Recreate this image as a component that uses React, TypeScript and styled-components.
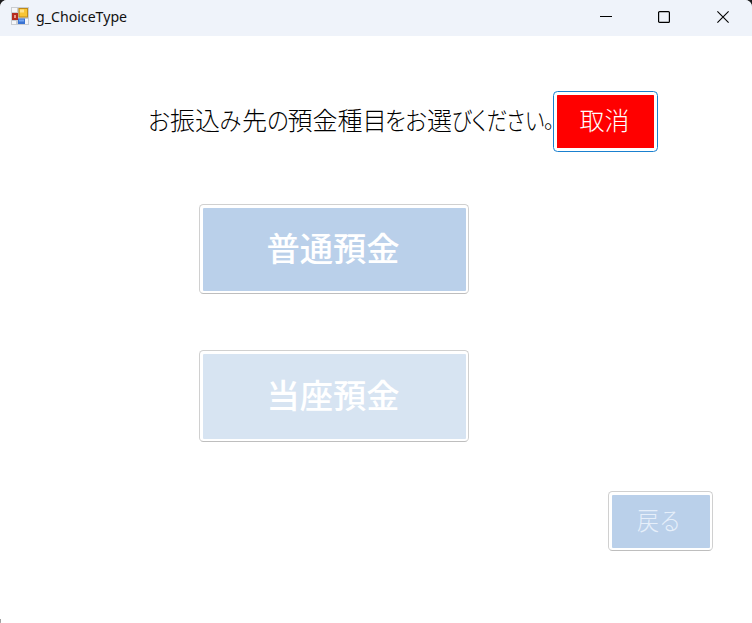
import React from "react";
import styled, { createGlobalStyle } from "styled-components";

const GlobalStyle = createGlobalStyle`
  * { box-sizing: border-box; }
  body { margin: 0; background: #1d1d1f; overflow: hidden; }
`;

const Window = styled.div`
  width: 752px;
  height: 623px;
  display: flex;
  flex-direction: column;
  overflow: hidden;
  border-radius: 7px 7px 0 1px;
  background: #fff;
  font-family: "Noto Sans CJK JP", sans-serif;
`;

const TitleBar = styled.header`
  flex: 0 0 36px;
  display: flex;
  align-items: flex-start;
  background: #eff3fa;
`;

const AppIcon = styled.svg`
  width: 18px;
  height: 18px;
  margin: 7px 0 0 11px;
`;

const Title = styled.span`
  flex: 1;
  margin: 7px 0 0 7px;
  font: 14px/20px "Noto Sans", sans-serif;
  color: #111;
`;

const TitleText = styled.span`
  display: inline-block;
  transform: scaleX(1.01);
  transform-origin: left;
`;

const WindowButton = styled.button`
  width: 58.5px;
  height: 34px;
  padding: 0;
  border: 0;
  background: none;
  display: grid;
  place-items: center;
`;

const Body = styled.main`
  flex: 1;
  display: flex;
  flex-direction: column;
`;

const PromptRow = styled.div`
  display: flex;
  margin: 55px 0 0 148px;
  height: 61px;
`;

const Prompt = styled.p`
  display: flex;
  width: 405px;
  margin: 0;
  padding-top: 10px;
  font-size: 25px;
  line-height: 36px;
  font-weight: 300;
  color: #000;
  white-space: nowrap;
`;

const Run = styled.span<{ $width: number; $scale?: number }>`
  flex: 0 0 ${(p) => p.$width}px;
  min-width: 0;
  display: flex;
  justify-content: center;
  transform: scaleX(${(p) => p.$scale ?? 1});
`;

const Stop = styled.span`
  flex: 0 0 8px;
  min-width: 0;
  margin-left: -1px;
  font-size: 21px;
`;

const Button = styled.button<{
  $width: number;
  $height: number;
  $fill: string;
  $focused?: boolean;
  $large?: boolean;
  $ink?: string;
}>`
  width: ${(p) => p.$width}px;
  height: ${(p) => p.$height}px;
  padding: ${(p) => (p.$focused ? 3 : 2.5)}px;
  border: 1px solid ${(p) => (p.$focused ? "#1a80cf" : "#d0d0d0")};
  border-bottom-color: ${(p) => (p.$focused ? "#1a80cf" : "#bebebe")};
  border-radius: 4.5px;
  background: linear-gradient(${(p) => p.$fill}, ${(p) => p.$fill}) content-box, #fff;
  color: ${(p) => p.$ink ?? "#fff"};
  font-family: inherit;
  font-size: ${(p) => (p.$large ? 33.3 : 25)}px;
  font-weight: ${(p) => (p.$large ? 500 : 300)};
  line-height: 36px;
  display: flex;
  align-items: center;
  justify-content: center;
`;

const Label = styled.span<{ $x?: number; $y?: number; $scale?: number }>`
  padding: 0 ${(p) => p.$x ?? 0}px ${(p) => p.$y ?? 0}px 0;
  transform: scaleX(${(p) => p.$scale ?? 1});
`;

const Choices = styled.div`
  display: flex;
  flex-direction: column;
  gap: 56px;
  margin: 52px 0 0 199px;
`;

const Footer = styled.footer`
  display: flex;
  justify-content: flex-end;
  margin: 49px 39px 0 0;
`;

const EdgeMark = styled.div`
  width: 1px;
  height: 4px;
  margin-top: auto;
  background: #a0a0a0;
`;

const RUNS: { text: string; width: number; scale?: number }[] = [
  { text: "お", width: 22, scale: 0.9 },
  { text: "振込", width: 50 },
  { text: "み", width: 21, scale: 0.88 },
  { text: "先", width: 27 },
  { text: "の", width: 20, scale: 0.9 },
  { text: "預金種", width: 74 },
  { text: "目", width: 25, scale: 0.97 },
  { text: "を", width: 18, scale: 0.9 },
  { text: "お", width: 22, scale: 0.9 },
  { text: "選", width: 25 },
  { text: "び", width: 20, scale: 0.84 },
  { text: "く", width: 15, scale: 0.9 },
  { text: "だ", width: 20, scale: 0.82 },
  { text: "さ", width: 18, scale: 0.82 },
  { text: "い", width: 20, scale: 0.82 },
];

export default function App() {
  return (
    <>
      <GlobalStyle />
      <Window>
        <TitleBar>
          <AppIcon viewBox="0 0 18 18" aria-hidden="true">
            <rect width="18" height="18" fill="#c9ccd1" />
            <path d="M1 1h5v4H1zM1 14h4v3H1zM14 12h3v5h-3z" fill="#f5f6f8" />
            <rect x="1" y="6" width="6" height="7" fill="#b52b20" />
            <rect x="3" y="8" width="2" height="3" fill="#e79a88" />
            <rect x="7.5" y="1" width="9.5" height="9.5" fill="#bf8a18" />
            <rect x="8.5" y="2" width="7.5" height="7.5" fill="#f8c535" />
            <rect x="9" y="2.5" width="4" height="3" fill="#ffe28a" />
            <rect x="7" y="11.5" width="7" height="5.5" fill="#3972d2" />
            <rect x="8" y="12.5" width="5" height="2" fill="#74a5f2" />
          </AppIcon>
          <Title><TitleText>g_ChoiceType</TitleText></Title>
          <WindowButton aria-label="Minimize">
            <svg width="12" height="12"><path d="M0 5.5h12" stroke="#000" /></svg>
          </WindowButton>
          <WindowButton aria-label="Maximize">
            <svg width="12" height="12"><rect x=".6" y=".6" width="10.8" height="10.8" rx="1" fill="none" stroke="#000" strokeWidth="1.2" /></svg>
          </WindowButton>
          <WindowButton aria-label="Close">
            <svg width="12" height="12"><path d="M.4.4l11.2 11.2M11.6.4L.4 11.6" stroke="#000" strokeWidth="1.1" /></svg>
          </WindowButton>
        </TitleBar>
        <Body>
          <PromptRow>
            <Prompt>
              {RUNS.map((r, i) => (
                <Run key={i} $width={r.width} $scale={r.scale}>{r.text}</Run>
              ))}
              <Stop>。</Stop>
            </Prompt>
            <Button $width={105} $height={61} $fill="#ff0000" $focused>
              <Label $x={2} $y={5}>取消</Label>
            </Button>
          </PromptRow>
          <Choices>
            <Button $width={270} $height={90} $fill="#bad0ea" $large>
              <Label $x={2} $y={5}>普通預金</Label>
            </Button>
            <Button $width={270} $height={92} $fill="#d7e4f2" $large>
              <Label $x={2} $y={5}>当座預金</Label>
            </Button>
          </Choices>
          <Footer>
            <Button $width={105} $height={60} $fill="#bad0ea" $ink="#e6effa">
              <Label $x={2} $y={4} $scale={0.88}>戻る</Label>
            </Button>
          </Footer>
          <EdgeMark />
        </Body>
      </Window>
    </>
  );
}
